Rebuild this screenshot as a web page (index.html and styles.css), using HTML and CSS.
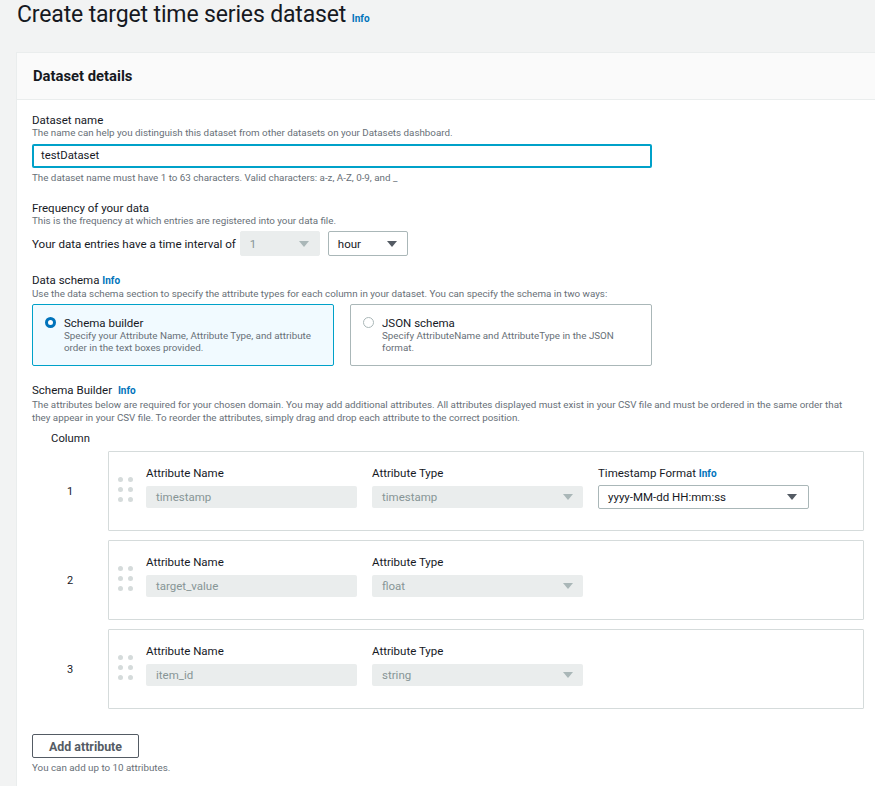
FILE: index.html
```html
<!DOCTYPE html>
<html lang="en">
<head>
<meta charset="utf-8">
<title>Create target time series dataset</title>
<link rel="stylesheet" href="styles.css">
</head>
<body>
<div class="page">
  <h1 class="title">Create target time series dataset <a class="info">Info</a></h1>

  <section class="panel">
    <header class="panel-header"><h2>Dataset details</h2></header>
    <div class="panel-body">

      <div class="field">
        <div class="label">Dataset name</div>
        <div class="desc">The name can help you distinguish this dataset from other datasets on your Datasets dashboard.</div>
        <div class="text-input focused">testDataset</div>
        <div class="constraint">The dataset name must have 1 to 63 characters. Valid characters: a-z, A-Z, 0-9, and _</div>
      </div>

      <div class="field">
        <div class="label">Frequency of your data</div>
        <div class="desc">This is the frequency at which entries are registered into your data file.</div>
        <div class="interval-row">
          <span class="interval-text">Your data entries have a time interval of</span>
          <div class="select small disabled"><span>1</span><i class="caret"></i></div>
          <div class="select small"><span>hour</span><i class="caret"></i></div>
        </div>
      </div>

      <div class="field">
        <div class="label">Data schema <a class="info">Info</a></div>
        <div class="desc">Use the data schema section to specify the attribute types for each column in your dataset. You can specify the schema in two ways:</div>
        <div class="tiles">
          <div class="tile selected">
            <span class="radio checked"></span>
            <div class="tile-text">
              <div class="tile-title">Schema builder</div>
              <div class="tile-desc">Specify your Attribute Name, Attribute Type, and attribute order in the text boxes provided.</div>
            </div>
          </div>
          <div class="tile">
            <span class="radio"></span>
            <div class="tile-text">
              <div class="tile-title">JSON schema</div>
              <div class="tile-desc">Specify AttributeName and AttributeType in the JSON format.</div>
            </div>
          </div>
        </div>
      </div>

      <div class="field">
        <div class="label">Schema Builder <a class="info gap">Info</a></div>
        <div class="desc two">The attributes below are required for your chosen domain. You may add additional attributes. All attributes displayed must exist in your CSV file and must be ordered in the same order that they appear in your CSV file. To reorder the attributes, simply drag and drop each attribute to the correct position.</div>

        <div class="columns">
          <div class="col-head">Column</div>

          <div class="attr-row">
            <div class="col-num">1</div>
            <div class="card">
              <span class="dots"><i></i><i></i><i></i><i></i><i></i><i></i></span>
              <div class="attr-field">
                <div class="attr-label">Attribute Name</div>
                <div class="box disabled">timestamp</div>
              </div>
              <div class="attr-field">
                <div class="attr-label">Attribute Type</div>
                <div class="box disabled select-box"><span>timestamp</span><i class="caret"></i></div>
              </div>
              <div class="attr-field">
                <div class="attr-label">Timestamp Format <a class="info">Info</a></div>
                <div class="box select-box enabled"><span>yyyy-MM-dd HH:mm:ss</span><i class="caret"></i></div>
              </div>
            </div>
          </div>

          <div class="attr-row">
            <div class="col-num">2</div>
            <div class="card">
              <span class="dots"><i></i><i></i><i></i><i></i><i></i><i></i></span>
              <div class="attr-field">
                <div class="attr-label">Attribute Name</div>
                <div class="box disabled">target_value</div>
              </div>
              <div class="attr-field">
                <div class="attr-label">Attribute Type</div>
                <div class="box disabled select-box"><span>float</span><i class="caret"></i></div>
              </div>
            </div>
          </div>

          <div class="attr-row">
            <div class="col-num">3</div>
            <div class="card">
              <span class="dots"><i></i><i></i><i></i><i></i><i></i><i></i></span>
              <div class="attr-field">
                <div class="attr-label">Attribute Name</div>
                <div class="box disabled">item_id</div>
              </div>
              <div class="attr-field">
                <div class="attr-label">Attribute Type</div>
                <div class="box disabled select-box"><span>string</span><i class="caret"></i></div>
              </div>
            </div>
          </div>
        </div>

        <button class="btn">Add attribute</button>
        <div class="constraint">You can add up to 10 attributes.</div>
      </div>

    </div>
  </section>
</div>
</body>
</html>
```
FILE: styles.css
```css
* { box-sizing: border-box; }
html, body { margin: 0; padding: 0; }
body {
  background: #f2f3f3;
  font-family: Roboto, "Liberation Sans", Arial, sans-serif;
  color: #16191f;
  overflow: hidden;
}
.page { width: 875px; height: 786px; overflow: hidden; }

.title {
  margin: 0;
  padding: 0 0 0 17px;
  height: 52px;
  font-size: 23px;
  font-weight: 400;
  line-height: 30px;
  letter-spacing: -0.15px;
  color: #16191f;
}
.title .info { font-size: 10px; vertical-align: 0; margin-left: 0; letter-spacing: 0; }

.info {
  color: #0073bb;
  font-weight: 700;
  font-size: 10px;
  text-decoration: none;
}
.info.gap { margin-left: 3px; }

.panel {
  margin-left: 16px;
  width: 880px;
  background: #fff;
  border-top: 1px solid #eaeded;
  border-left: 1px solid #eaeded;
  min-height: 740px;
}
.panel-header {
  height: 47px;
  background: #fafafa;
  border-bottom: 1px solid #eaeded;
  padding-left: 16px;
  display: flex;
  align-items: center;
}
.panel-header h2 {
  margin: 0;
  font-size: 14.8px;
  font-weight: 700;
}
.panel-body { padding: 13px 0 0 15px; }

.field { margin-bottom: 17px; }
.label { font-size: 11.5px; line-height: 14px; }
.desc { font-size: 9.8px; line-height: 12px; color: #687078; }
.desc.two { width: 815px; line-height: 13px; }
.constraint { font-size: 9.8px; line-height: 12px; color: #687078; margin-top: 4px; }

.text-input {
  margin-top: 5px;
  width: 620px;
  height: 24px;
  border: 2px solid #00a1c9;
  border-radius: 2px;
  font-size: 11.3px;
  line-height: 20px;
  padding-left: 7px;
  color: #16191f;
}

.interval-row {
  margin-top: 4px;
  display: flex;
  align-items: center;
  height: 25px;
}
.interval-text { font-size: 11.6px; margin-right: 4px; }
.select {
  width: 80px;
  height: 25px;
  border: 1px solid #aab7b8;
  border-radius: 2px;
  display: flex;
  align-items: center;
  justify-content: space-between;
  padding: 0 10px 0 9px;
  font-size: 11.5px;
  margin-right: 8px;
  background: #fff;
}
.select.disabled { background: #eaeded; border-color: #eaeded; color: #879596; }
.caret {
  width: 0; height: 0;
  border-left: 5px solid transparent;
  border-right: 5px solid transparent;
  border-top: 6px solid #545b64;
}
.disabled .caret { border-top-color: #aab7b8; }

.tiles { display: flex; gap: 16px; margin-top: 4px; }
.tile {
  width: 302px;
  height: 62px;
  border: 1px solid #aab7b8;
  border-radius: 2px;
  display: flex;
  padding: 11px 10px 0 12px;
  background: #fff;
}
.tile.selected { background: #f1faff; border-color: #00a1c9; }
.tile-text { max-width: 256px; }
.radio {
  flex: none;
  width: 11px; height: 11px;
  border-radius: 50%;
  border: 1px solid #aab7b8;
  background: #fff;
  margin-top: 1px;
  margin-right: 8px;
}
.radio.checked { border: 3.5px solid #0073bb; }
.tile-title { font-size: 11.5px; line-height: 14px; }
.tile-desc { font-size: 9.8px; line-height: 12px; color: #687078; }

.columns { margin-top: 8px; }
.col-head { width: 76px; text-align: center; font-size: 11.3px; line-height: 14px; padding-left: 1px; }
.attr-row { display: flex; align-items: center; margin-top: 5px; }
.attr-row + .attr-row { margin-top: 9px; }
.col-num { width: 76px; text-align: center; font-size: 11px; }
.card {
  width: 756px;
  height: 80px;
  border: 1px solid #d5dbdb;
  border-radius: 1px;
  display: flex;
  align-items: flex-start;
  padding: 14px 0 0 9px;
  gap: 15px;
}
.dots {
  display: grid;
  grid-template-columns: 5px 5px;
  gap: 5px 5px;
  margin-top: 11px;
  margin-right: -3px;
  width: 16px;
}
.dots i { width: 5px; height: 5px; border-radius: 50%; background: #d5dbdb; display: block; }
.attr-field { width: 211px; }
.attr-label { font-size: 11.5px; line-height: 14px; height: 14px; }
.box {
  margin-top: 6px;
  height: 22px;
  border-radius: 2px;
  font-size: 11.5px;
  line-height: 22px;
  padding: 0 10px;
}
.box.disabled { background: #eaeded; color: #879596; }
.select-box { display: flex; align-items: center; justify-content: space-between; }
.select-box.enabled { border: 1px solid #aab7b8; height: 24px; margin-top: 5px; padding: 0 11px 0 9px; color: #16191f; }

.btn {
  margin-top: 25px;
  display: block;
  width: 107px;
  height: 24px;
  border: 1px solid #545b64;
  border-radius: 2px;
  background: #fff;
  font-family: inherit;
  font-weight: 700;
  font-size: 12.4px;
  color: #545b64;
  padding: 0;
}
```
